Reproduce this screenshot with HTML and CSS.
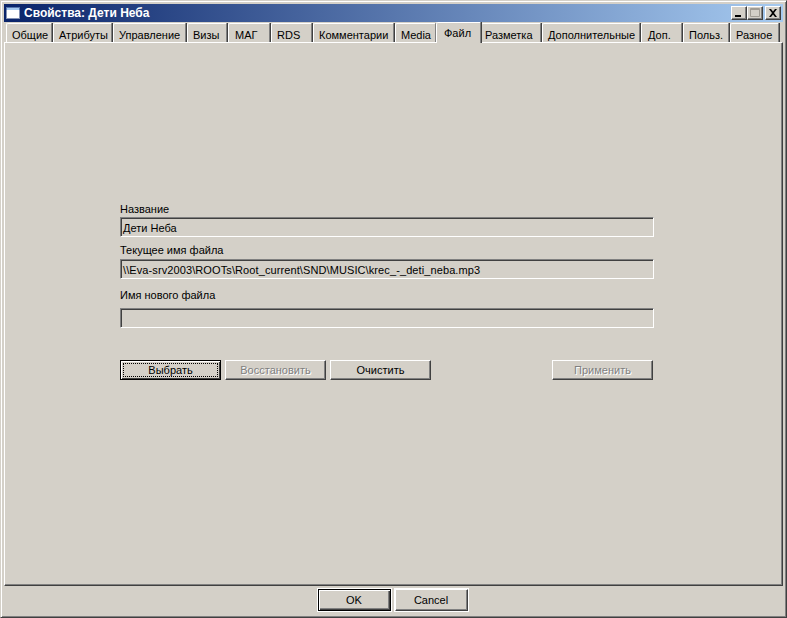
FILE: index.html
```html
<!DOCTYPE html>
<html lang="ru">
<head>
<meta charset="utf-8">
<title>Свойства: Дети Неба</title>
<link rel="stylesheet" href="styles.css">
</head>
<body>
<div class="window">
  <div class="titlebar">
    <svg class="app-icon" width="14" height="12" viewBox="0 0 14 12"><rect width="14" height="12" fill="#fff"/><rect x="0" y="0" width="14" height="3" fill="#a6caf0"/><rect x="0.5" y="0.5" width="13" height="11" fill="none" stroke="#0a246a" stroke-width="1" opacity="0.5"/></svg>
    <span class="title-text">Свойства: Дети Неба</span>
    <div class="controls">
      <div class="ctl"><svg width="14" height="12" viewBox="0 0 14 12"><rect x="3" y="8" width="6" height="2" fill="#000"/></svg></div>
      <div class="ctl"><svg width="14" height="12" viewBox="0 0 14 12"><path d="M2.5 1.5h9v8h-9zM2.5 2.5h9" fill="none" stroke="#a09c94"/></svg></div>
      <div class="ctl ctl-close"><svg width="14" height="12" viewBox="0 0 14 12"><path d="M3 2h2l2 2.5L9 2h2L8 6l3 4H9L7 7.5 5 10H3l3-4z" fill="#000"/></svg></div>
    </div>
  </div>
  <div class="tabs">
    <div class="tab t1">Общие</div>
    <div class="tab t2">Атрибуты</div>
    <div class="tab t3">Управление</div>
    <div class="tab t4">Визы</div>
    <div class="tab t5">МАГ</div>
    <div class="tab t6">RDS</div>
    <div class="tab t7">Комментарии</div>
    <div class="tab t8">Media</div>
    <div class="tab t9 active">Файл</div>
    <div class="tab t10">Разметка</div>
    <div class="tab t11">Дополнительные</div>
    <div class="tab t12">Доп.</div>
    <div class="tab t13">Польз.</div>
    <div class="tab t14">Разное</div>
  </div>
  <div class="panel">
    <div class="form">
      <div class="label l1">Название</div>
      <div class="field">Дети Неба</div>
      <div class="label l2">Текущее имя файла</div>
      <div class="field path">\\Eva-srv2003\ROOTs\Root_current\SND\MUSIC\krec_-_deti_neba.mp3</div>
      <div class="label l3">Имя нового файла</div>
      <div class="field"></div>
      <div class="actions">
        <div class="btn default"><span class="focus">Выбрать</span></div>
        <div class="btn disabled">Восстановить</div>
        <div class="btn">Очистить</div>
        <div class="btn disabled apply">Применить</div>
      </div>
    </div>
  </div>
  <div class="footer">
    <div class="btn fbtn default-ok">OK</div>
    <div class="btn fbtn">Cancel</div>
  </div>
</div>
</body>
</html>
```
FILE: styles.css
```css
* { box-sizing: border-box; }
html, body { margin: 0; padding: 0; height: 618px; overflow: hidden; background: #d4d0c8; }
body { font-family: "Liberation Sans", Arial, sans-serif; font-size: 11px; color: #000; }

.window {
  width: 787px; height: 618px;
  display: flex; flex-direction: column;
  background: #d4d0c8;
  border: 1px solid; border-color: #d4d0c8 #404040 #404040 #d4d0c8;
  box-shadow: inset 1px 1px 0 #fff, inset -1px -1px 0 #808080;
  padding: 3px;
}

.titlebar {
  flex: none; height: 18px; display: flex; align-items: center;
  padding: 0 2px;
  background: linear-gradient(to right, #0a246a, #a6caf0);
  color: #fff;
}
.app-icon { flex: none; margin-right: 4px; }
.title-text { font-weight: bold; font-size: 12px; line-height: 18px; }
.controls { margin-left: auto; display: flex; }
.ctl {
  width: 16px; height: 14px;
  background: #d4d0c8;
  border: 1px solid; border-color: #fff #404040 #404040 #fff;
  box-shadow: inset -1px -1px 0 #808080;
  display: flex;
}
.ctl-close { margin-left: 2px; }

.tabs {
  flex: none; height: 21px; display: flex; align-items: flex-end;
  padding-left: 2px; position: relative; z-index: 1; margin-bottom: -1px;
}
.tab {
  height: 19px; margin-bottom: 1px;
  display: flex; align-items: center; justify-content: flex-start;
  background: #d4d0c8;
  border-top: 1px solid #fff; border-left: 1px solid #fff; border-right: 1px solid #808080;
  border-top-left-radius: 2px;
  box-shadow: 1px 0 0 #404040;
  padding: 4px 0 0 5px;
  margin-right: 1px;
  white-space: nowrap;
}
.tab.active {
  height: 21px; margin-bottom: 0; padding: 0 0 0 7px;
  margin-left: -1px; margin-right: 0;
  z-index: 2; position: relative;
}
.t1 { width: 46px; }
.t2 { width: 59px; }
.t3 { width: 73px; }
.t4 { width: 40px; }
.t5 { width: 42px; padding-left: 6px; }
.t6 { width: 41px; }
.t7 { width: 81px; }
.t8 { width: 41px; }
.t9 { width: 45px; }
.t10 { width: 60px; padding-left: 3px; }
.t11 { width: 98px; }
.t12 { width: 41px; padding-left: 6px; }
.t13 { width: 46px; }
.t14 { width: 49px; }

.panel {
  flex: 1; min-height: 0;
  background: #d4d0c8;
  border: 1px solid; border-color: #fff #404040 #404040 #fff;
  box-shadow: inset -1px -1px 0 #808080;
  padding: 159px 0 0 115px;
}
.form { width: 534px; display: flex; flex-direction: column; }
.label { height: 14px; padding-top: 1px; line-height: 13px; }
.l1 { margin-bottom: 1px; }
.l2 { margin-top: 6px; margin-bottom: 2px; }
.l3 { margin-top: 9px; margin-bottom: 6px; }
.field {
  height: 20px; line-height: 16px;
  padding: 2px 0 0 2px;
  background: #d4d0c8;
  border: 1px solid; border-color: #808080 #fff #fff #808080;
  box-shadow: inset 1px 1px 0 #404040;
  white-space: nowrap;
}
.path { letter-spacing: 0.1px; }
.actions { display: flex; gap: 4px; margin-top: 32px; }
.btn {
  width: 101px; height: 20px;
  display: flex; align-items: center; justify-content: center;
  background: #d4d0c8;
  border: 1px solid; border-color: #fff #404040 #404040 #fff;
  box-shadow: inset -1px -1px 0 #808080;
}
.btn.disabled { color: #808080; text-shadow: 1px 1px 0 #fff; }
.btn.default { border: 1px solid #000; box-shadow: inset 1px 1px 0 #fff, inset -1px -1px 0 #404040; padding: 2px; }
.focus { flex: 1; align-self: stretch; display: flex; align-items: center; justify-content: center; border: 1px dotted #000; }
.apply { margin-left: auto; margin-right: 1px; }

.footer {
  flex: none; height: 28px; display: flex; justify-content: center; align-items: center; gap: 4px;
  padding-right: 2px;
}
.fbtn { width: 73px; height: 22px; outline: 1px solid #fff; outline-offset: 0; }
.default-ok { border: 1px solid #000; box-shadow: inset 1px 1px 0 #fff, inset -1px -1px 0 #404040, inset -2px -2px 0 #808080; }
```
